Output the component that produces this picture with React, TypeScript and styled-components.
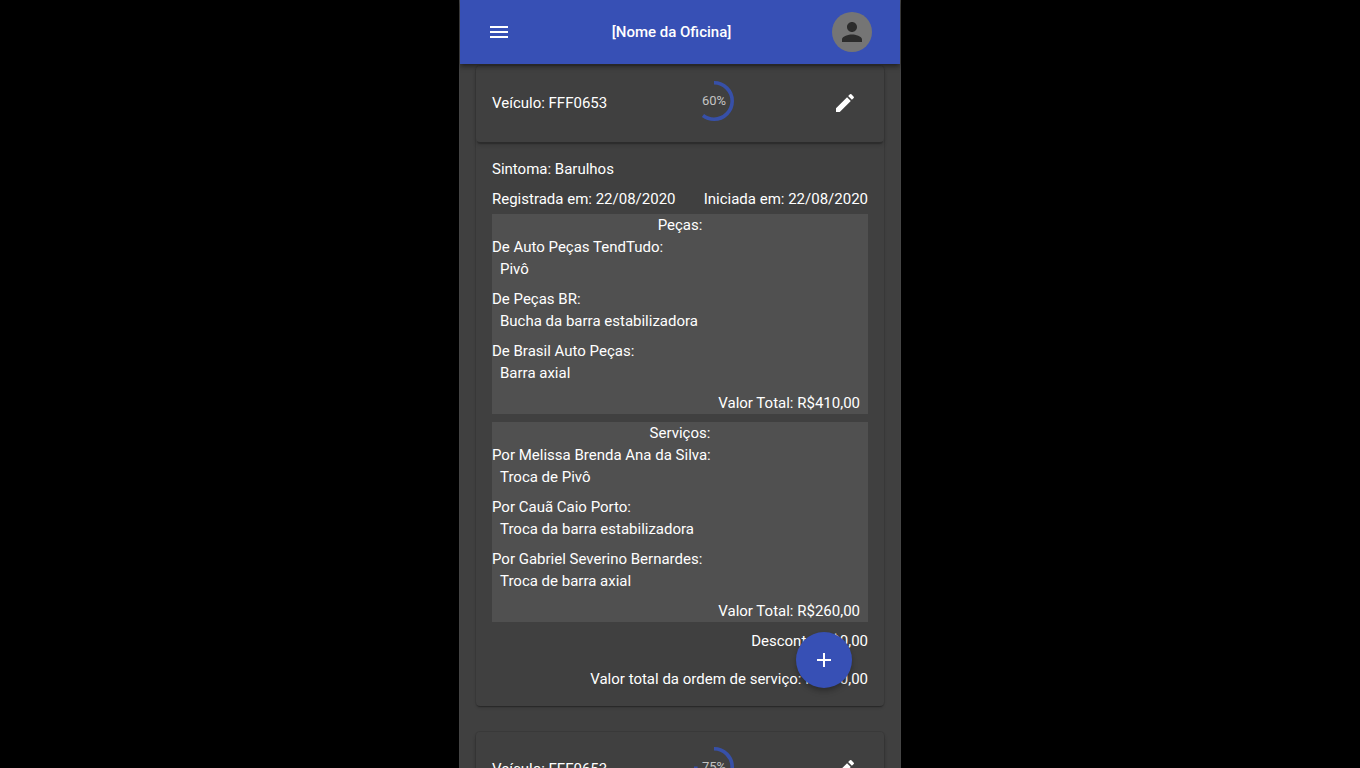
import React from "react";
import styled, { createGlobalStyle } from "styled-components";

const GlobalStyle = createGlobalStyle`
  *, *::before, *::after { box-sizing: border-box; }
  body {
    margin: 0;
    background: #000;
    color: #fff;
    font-family: Roboto, "Liberation Sans", sans-serif;
    font-size: 15px;
    line-height: 22px;
    overflow: hidden;
  }
  h1, h2, h3, p, ul { margin: 0; padding: 0; font: inherit; list-style: none; }
`;

const Shell = styled.div`
  position: relative;
  display: flex;
  flex-direction: column;
  width: 100%;
  max-width: 442px;
  height: 100vh;
  margin: 0 auto;
  background: #404040;
  border: solid #444;
  border-width: 0 1px;
`;

const AppBar = styled.header`
  position: relative;
  z-index: 1;
  display: flex;
  flex: none;
  align-items: center;
  justify-content: space-between;
  height: 64px;
  padding: 0 16px 0 15px;
  background: #3750b5;
  box-shadow: 0 2px 4px -1px rgba(0, 0, 0, 0.4), 0 4px 5px rgba(0, 0, 0, 0.2);
`;

const Title = styled.h1`
  font-weight: 500;
`;

const IconButton = styled.button`
  display: flex;
  padding: 12px;
  border: 0;
  border-radius: 50%;
  background: none;
  color: #fff;
  cursor: pointer;
`;

const Icon = styled.svg`
  display: block;
  width: 24px;
  height: 24px;
  fill: currentColor;
`;

const Avatar = styled.span`
  display: flex;
  align-items: center;
  justify-content: center;
  width: 40px;
  height: 40px;
  border-radius: 50%;
  background: #757575;
  color: #2c2c2c;

  svg { width: 30px; height: 30px; }
`;

const Orders = styled.main`
  display: flex;
  flex: 1;
  flex-direction: column;
  gap: 26px;
  min-height: 0;
  padding: 2px 16px;
  overflow: hidden;
`;

const Card = styled.article`
  flex: none;
  border-radius: 4px;
  box-shadow: 0 2px 1px -1px rgba(0, 0, 0, 0.2), 0 0 0 1px rgba(0, 0, 0, 0.08), 0 2px 3px rgba(0, 0, 0, 0.14);
`;

const CardHeader = styled.div`
  display: flex;
  align-items: center;
  justify-content: space-between;
  height: 76px;
  padding: 0 15px 2px 16px;
  border-radius: 4px;
  box-shadow: 0 3px 1px -1px rgba(0, 0, 0, 0.2), 0 3px 4px rgba(0, 0, 0, 0.16);
`;

const Progress = styled.div`
  display: grid;
  place-items: center;
  width: 40px;
  height: 40px;
  margin-bottom: 4px;

  > * { grid-area: 1 / 1; }
`;

const Ring = styled.svg`
  width: 40px;
  height: 40px;
  transform: rotate(-90deg);
  fill: none;
  stroke: #3750a8;
  stroke-width: 3.6;
`;

const Percent = styled.span`
  color: rgba(255, 255, 255, 0.7);
  font-size: 13px;
  line-height: 20px;
`;

const CardBody = styled.div`
  padding: 16px;
`;

const Dates = styled.div`
  display: flex;
  justify-content: space-between;
  margin: 8px 0 4px;
`;

const Section = styled.section`
  margin-bottom: 8px;
  background: #505050;
`;

const SectionTitle = styled.h3`
  text-align: center;
`;

const Group = styled.div`
  margin-bottom: 8px;
`;

const Item = styled.li`
  padding-left: 8px;
`;

const Total = styled.p<{ $inset?: boolean }>`
  padding-right: ${(p) => (p.$inset ? "8px" : "0")};
  text-align: right;
`;

const Summary = styled.div`
  display: grid;
  gap: 16px;
`;

const Fab = styled.button`
  position: absolute;
  right: 48px;
  bottom: 80px;
  z-index: 2;
  display: flex;
  align-items: center;
  justify-content: center;
  width: 56px;
  height: 56px;
  padding: 0;
  border: 0;
  border-radius: 50%;
  background: #3750b5;
  color: #fff;
  box-shadow: 0 3px 5px -1px rgba(0, 0, 0, 0.2), 0 4px 6px rgba(0, 0, 0, 0.14);
  cursor: pointer;
`;

type Entry = { source: string; items: string[] };

const parts: Entry[] = [
  { source: "De Auto Peças TendTudo:", items: ["Pivô"] },
  { source: "De Peças BR:", items: ["Bucha da barra estabilizadora"] },
  { source: "De Brasil Auto Peças:", items: ["Barra axial"] },
];

const services: Entry[] = [
  { source: "Por Melissa Brenda Ana da Silva:", items: ["Troca de Pivô"] },
  { source: "Por Cauã Caio Porto:", items: ["Troca da barra estabilizadora"] },
  { source: "Por Gabriel Severino Bernardes:", items: ["Troca de barra axial"] },
];

function VehicleHeader({ plate, percent }: { plate: string; percent: number }) {
  const length = 2 * Math.PI * 18.2;
  return (
    <CardHeader>
      <h2>Veículo: {plate}</h2>
      <Progress>
        <Ring viewBox="0 0 40 40" aria-hidden="true">
          <circle cx="20" cy="20" r="18.2" strokeDasharray={`${(length * percent) / 100} ${length}`} />
        </Ring>
        <Percent>{`${percent}%`}</Percent>
      </Progress>
      <IconButton type="button" aria-label="Editar">
        <Icon viewBox="0 0 24 24">
          <path d="M3 17.25V21h3.75L17.81 9.94l-3.75-3.75L3 17.25zM20.71 7.04c.39-.39.39-1.02 0-1.41l-2.34-2.34a.9959.9959 0 0 0-1.41 0l-1.83 1.83 3.75 3.75 1.83-1.83z" />
        </Icon>
      </IconButton>
    </CardHeader>
  );
}

function EntrySection({ title, entries, total }: { title: string; entries: Entry[]; total: string }) {
  return (
    <Section>
      <SectionTitle>{title}</SectionTitle>
      {entries.map((entry) => (
        <Group key={entry.source}>
          <p>{entry.source}</p>
          <ul>
            {entry.items.map((item) => (
              <Item key={item}>{item}</Item>
            ))}
          </ul>
        </Group>
      ))}
      <Total $inset>Valor Total: {total}</Total>
    </Section>
  );
}

export default function App() {
  return (
    <>
      <GlobalStyle />
      <Shell>
        <AppBar>
          <IconButton type="button" aria-label="Menu">
            <Icon viewBox="0 0 24 24">
              <path d="M3 18h18v-2H3v2zm0-5h18v-2H3v2zm0-7v2h18V6H3z" />
            </Icon>
          </IconButton>
          <Title>[Nome da Oficina]</Title>
          <IconButton type="button" aria-label="Perfil">
            <Avatar>
              <Icon viewBox="0 0 24 24">
                <path d="M12 12c2.21 0 4-1.79 4-4s-1.79-4-4-4-4 1.79-4 4 1.79 4 4 4zm0 2c-2.67 0-8 1.34-8 4v2h16v-2c0-2.66-5.33-4-8-4z" />
              </Icon>
            </Avatar>
          </IconButton>
        </AppBar>
        <Orders>
          <Card>
            <VehicleHeader plate="FFF0653" percent={60} />
            <CardBody>
              <p>Sintoma: Barulhos</p>
              <Dates>
                <span>Registrada em: 22/08/2020</span>
                <span>Iniciada em: 22/08/2020</span>
              </Dates>
              <EntrySection title="Peças:" entries={parts} total="R$410,00" />
              <EntrySection title="Serviços:" entries={services} total="R$260,00" />
              <Summary>
                <Total>Desconto: R$0,00</Total>
                <Total>Valor total da ordem de serviço: R$670,00</Total>
              </Summary>
            </CardBody>
          </Card>
          <Card>
            <VehicleHeader plate="FFF0653" percent={75} />
          </Card>
        </Orders>
        <Fab type="button" aria-label="Adicionar">
          <Icon viewBox="0 0 24 24">
            <path d="M19 13h-6v6h-2v-6H5v-2h6V5h2v6h6v2z" />
          </Icon>
        </Fab>
      </Shell>
    </>
  );
}
